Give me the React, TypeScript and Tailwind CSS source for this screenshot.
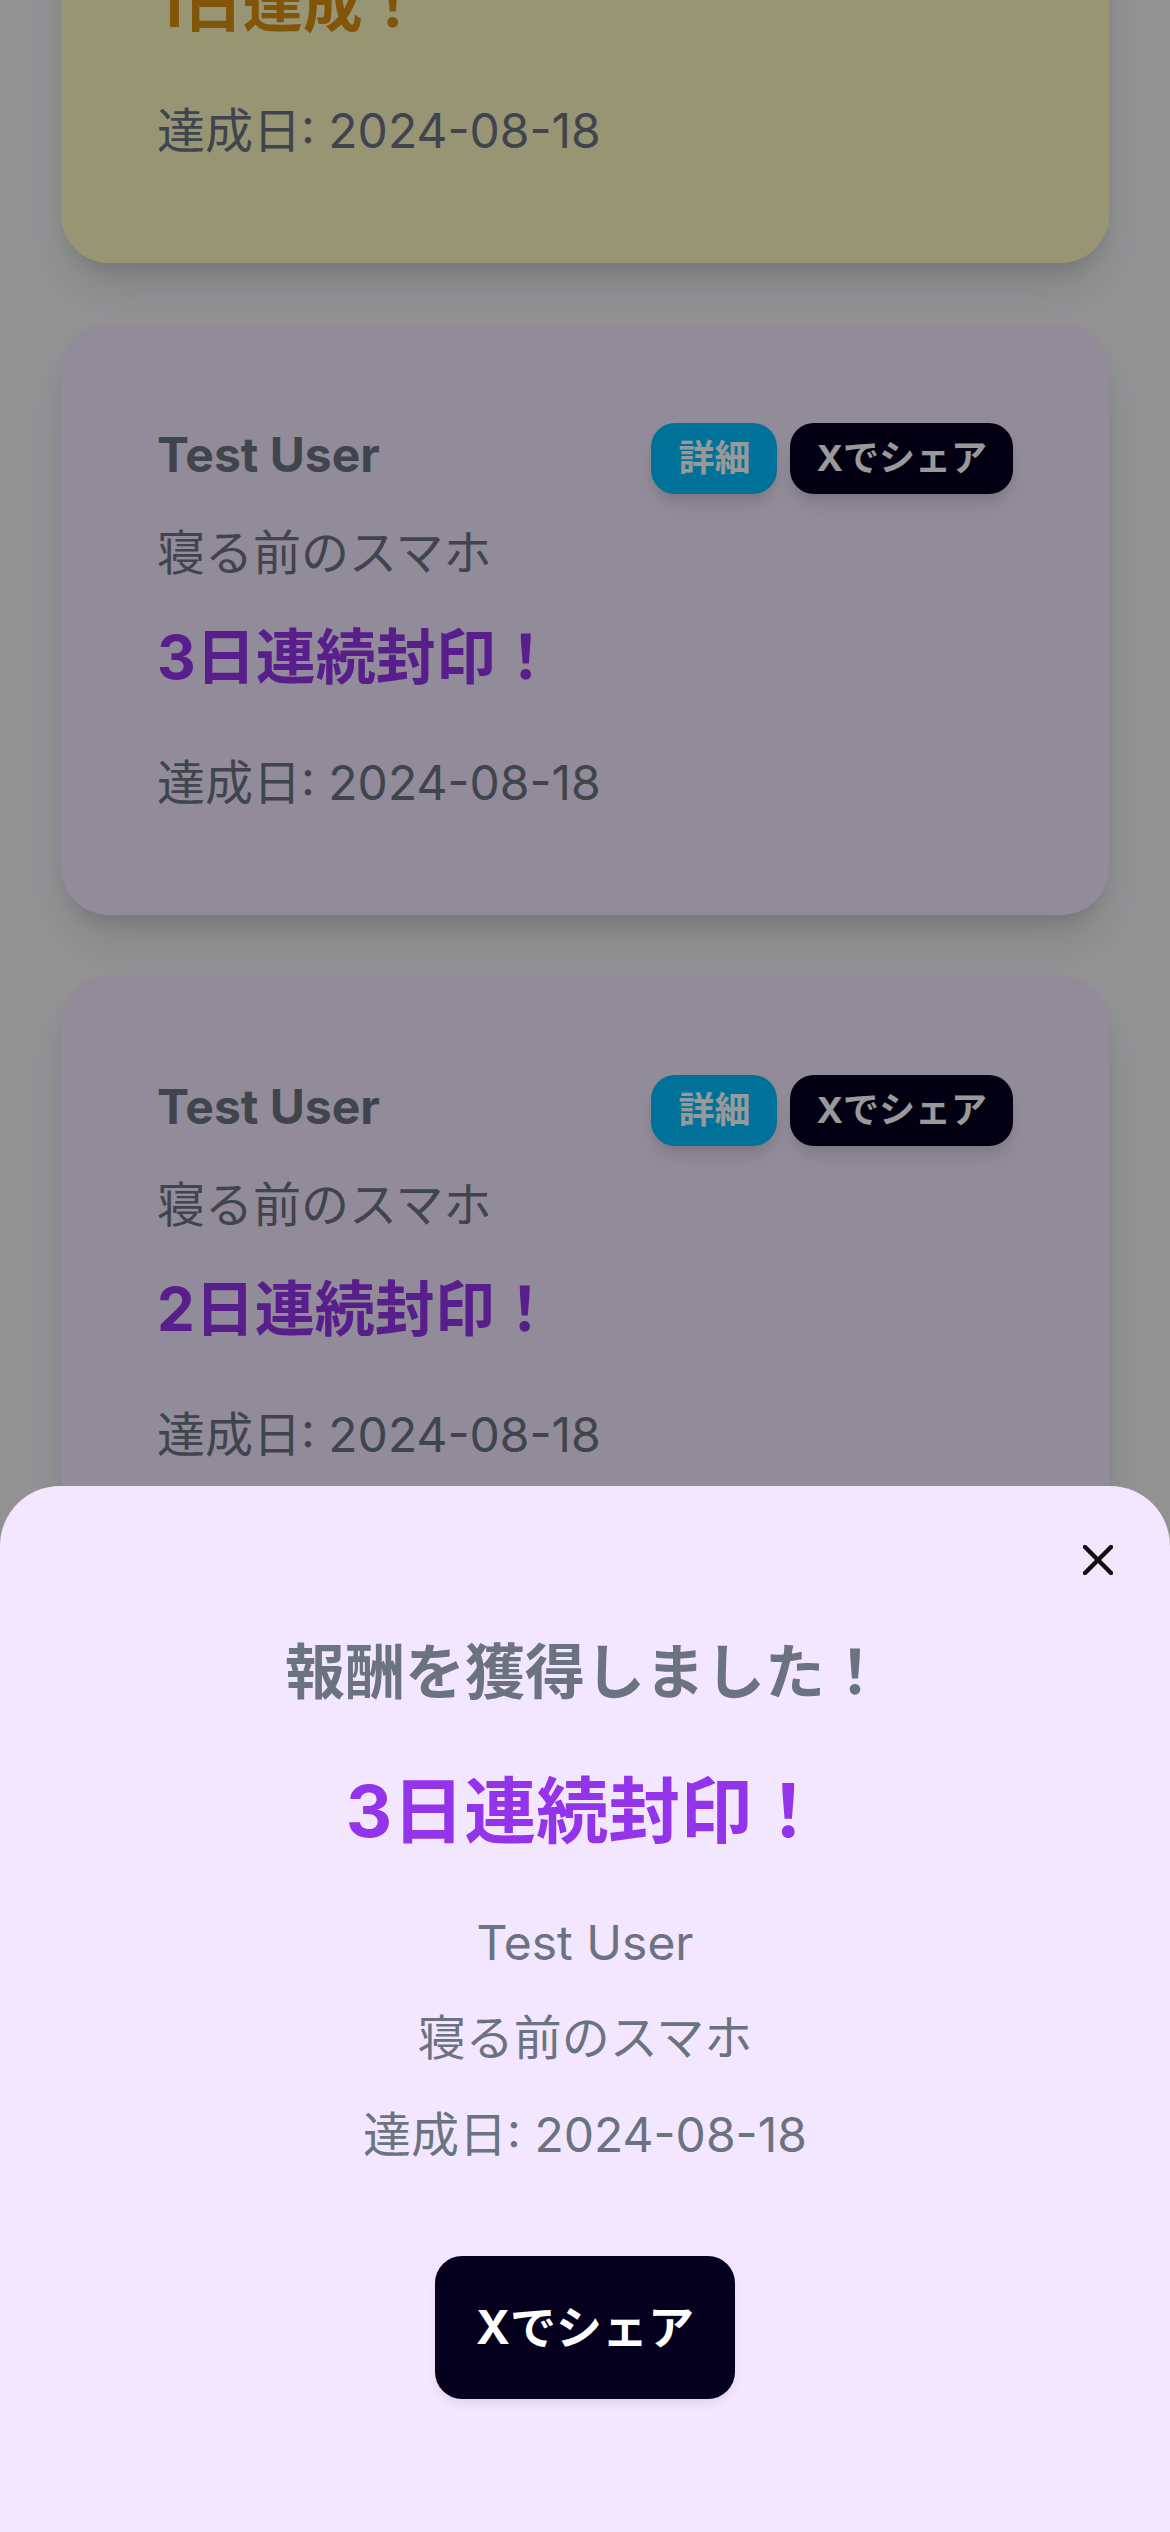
import React from "react";

type CardProps = {
  title: string;
  variant: "yellow" | "purple";
};

function RewardCard({ title, variant }: CardProps) {
  const bg = variant === "yellow" ? "bg-[#fef9c3]" : "bg-[#f3e8ff]";
  const titleColor = variant === "yellow" ? "text-[#d9900f]" : "text-[#9333ea]";
  return (
    <div
      className={`${bg} rounded-[48px] p-[96px] shadow-[0_30px_45px_-9px_rgba(0,0,0,0.12),0_12px_18px_-6px_rgba(0,0,0,0.1)]`}
    >
      <div className="flex items-start justify-between">
        <div className="text-[48px] leading-[72px] font-bold text-[#6b7280]">Test User</div>
        <div className="mt-[4px] flex gap-[13px]">
          <button className="h-[71px] rounded-[24px] bg-[#00bfff] px-[27px] text-[36px] leading-[71px] font-bold text-white shadow-[0_12px_18px_-3px_rgba(0,0,0,0.1),0_6px_12px_-6px_rgba(0,0,0,0.1)]">
            詳細
          </button>
          <button className="h-[71px] rounded-[24px] bg-[#04001e] px-[26px] text-[36px] leading-[71px] font-bold text-white shadow-[0_12px_18px_-3px_rgba(0,0,0,0.1),0_6px_12px_-6px_rgba(0,0,0,0.1)]">
            Xでシェア
          </button>
        </div>
      </div>
      <div className="mt-[23px] text-[48px] leading-[72px] text-[#6b7280]">寝る前のスマホ</div>
      <div className={`mt-[26px] text-[60px] leading-[84px] font-bold ${titleColor}`}>{title}</div>
      <div className="mt-[48px] text-[48px] leading-[72px] text-[#6b7280]">達成日: 2024-08-18</div>
    </div>
  );
}

export default function App() {
  return (
    <div className="relative h-[2532px] w-[1170px] overflow-hidden bg-[#f3f4f6] font-['Inter','Noto_Sans_CJK_JP',sans-serif]">
      <div className="mt-[-329px] flex flex-col gap-[60px] px-[61px]">
        <RewardCard title="1日達成！" variant="yellow" />
        <RewardCard title="3日連続封印！" variant="purple" />
        <RewardCard title="2日連続封印！" variant="purple" />
        <RewardCard title="1日達成！" variant="yellow" />
      </div>

      <div className="absolute inset-0 bg-black/40" />

      <div className="absolute inset-x-0 bottom-0 h-[1046px] rounded-t-[60px] bg-[#f3e6ff]">
        <button className="absolute right-[57px] top-[59px] h-[30px] w-[30px]" aria-label="close">
          <svg viewBox="0 0 30 30" width="30" height="30" className="block">
            <line x1="2" y1="2" x2="28" y2="28" stroke="#111" strokeWidth="4.5" strokeLinecap="round" />
            <line x1="28" y1="2" x2="2" y2="28" stroke="#111" strokeWidth="4.5" strokeLinecap="round" />
          </svg>
        </button>
        <div className="flex flex-col items-center pt-[144px] text-center">
          <div className="text-[60px] leading-[84px] font-bold text-[#6b7280]">報酬を獲得しました！</div>
          <div className="mt-[49px] text-[72px] leading-[96px] font-bold text-[#9333ea]">3日連続封印！</div>
          <div className="mt-[48px] text-[48px] leading-[72px] text-[#6b7280]">Test User</div>
          <div className="mt-[23px] text-[48px] leading-[72px] text-[#6b7280]">寝る前のスマホ</div>
          <div className="mt-[25px] text-[48px] leading-[72px] text-[#6b7280]">達成日: 2024-08-18</div>
          <button className="mt-[85px] flex h-[143px] w-[300px] items-center justify-center rounded-[27px] bg-[#04001e] text-[46px] font-bold text-white shadow-[0_6px_12px_-3px_rgba(0,0,0,0.1)]">
            Xでシェア
          </button>
        </div>
      </div>
    </div>
  );
}
